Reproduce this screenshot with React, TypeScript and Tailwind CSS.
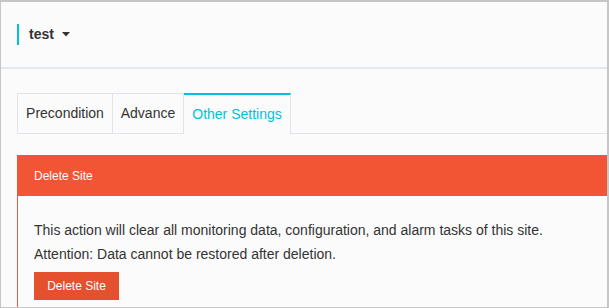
export default function App() {
  return (
    <div
      className="w-[609px] h-[308px] overflow-hidden bg-[#fbfbfb] border-t-2 border-l border-r-2 border-b border-[#c6c6c6] text-[#333]"
      style={{ fontFamily: '"Liberation Sans", Arial, sans-serif' }}
    >
      {/* Site header */}
      <div className="h-[65px] flex items-center pl-[16px]">
        <div className="w-[2px] h-[21px] bg-[#00c1de]" />
        <span className="ml-[10px] text-[14px] font-bold text-[#333]">test</span>
        <svg className="ml-[8px]" width="8" height="5" viewBox="0 0 8 5">
          <path d="M0 0 L8 0 L4 4.5 Z" fill="#333" />
        </svg>
      </div>
      <div className="h-[2px] bg-[#e3e8ec]" />

      {/* Tabs */}
      <div className="mt-[24px] pl-[16px] flex h-[41px]">
        <div className="w-[96px] border border-[#dfe5ea] flex items-center justify-center text-[14px] text-[#333]">
          Precondition
        </div>
        <div className="w-[71px] border-t border-b border-r border-[#dfe5ea] flex items-center justify-center text-[14px] text-[#333]">
          Advance
        </div>
        <div className="w-[107px] border-t-2 border-t-[#00c1de] border-r border-r-[#dfe5ea] flex items-center justify-center text-[14px] text-[#00c1de] pb-[1px]">
          Other Settings
        </div>
        <div className="flex-1 border-b border-[#dfe5ea]" />
      </div>

      {/* Delete panel */}
      <div className="mt-[21px] ml-[16px]">
        <div className="h-[41px] bg-[#f15533] flex items-center pl-[17px] text-[12px] text-white">
          Delete Site
        </div>
        <div className="border-l border-[#f15533] pl-[16px] pt-[22px] pb-[10px]">
          <p className="text-[14px] leading-[24px] text-[#333]">
            This action will clear all monitoring data, configuration, and alarm tasks of this site.
          </p>
          <p className="text-[14px] leading-[24px] text-[#333]">
            Attention: Data cannot be restored after deletion.
          </p>
          <button className="mt-[6px] w-[85px] h-[28px] bg-[#e3512f] text-white text-[12px]">
            Delete Site
          </button>
        </div>
      </div>
    </div>
  )
}
